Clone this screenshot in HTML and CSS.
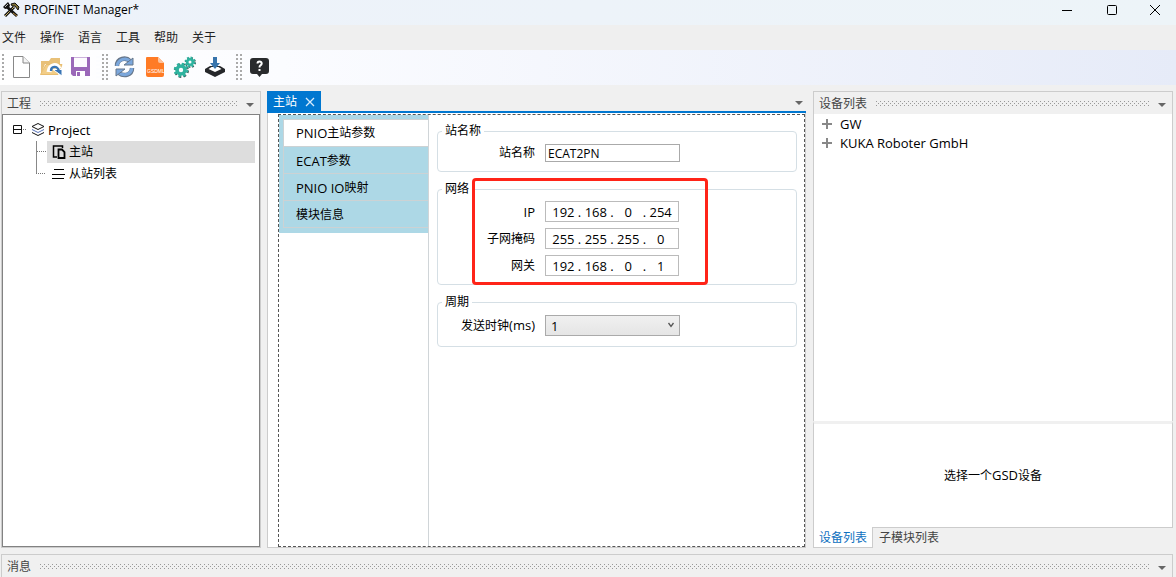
FILE: index.html
```html
<!DOCTYPE html>
<html lang="zh-CN">
<head>
<meta charset="utf-8">
<title>PROFINET Manager*</title>
<link rel="stylesheet" href="styles.css">
</head>
<body>
<header class="titlebar">
  <svg class="app-icon" width="18" height="18" viewBox="0 0 18 18"><path d="M3 15 12 6" stroke="#111" stroke-width="3"/><path d="M3 15 12 6" stroke="#c9b26a" stroke-width="1"/><path d="M5 6 15 15" stroke="#111" stroke-width="3"/><path d="M11 12 15 15" stroke="#b98b3c" stroke-width="1"/><path d="M1 6 6 1 8 4 7 7 3 8Z" fill="#111"/><path d="M3 6 6 3" stroke="#bbb"/><path d="M9 3 13 2 17 6 16 9 13 5 10 5Z" fill="#817337" stroke="#111"/></svg>
  <h1 class="app-title">PROFINET Manager*</h1>
  <div class="window-buttons">
    <button class="window-button" aria-label="最小化"><svg width="12" height="12" viewBox="0 0 12 12"><path d="M1 6.500H11" stroke="#000"/></svg></button>
    <button class="window-button" aria-label="最大化"><svg width="12" height="12" viewBox="0 0 12 12"><rect x="1.500" y="1.500" width="9" height="9" rx="1" fill="none" stroke="#000"/></svg></button>
    <button class="window-button" aria-label="关闭"><svg width="12" height="12" viewBox="0 0 12 12"><path d="M1 1 11 11M11 1 1 11" stroke="#000"/></svg></button>
  </div>
</header>
<nav class="menubar">
  <button class="menu">文件</button><button class="menu">操作</button><button class="menu">语言</button><button class="menu">工具</button><button class="menu">帮助</button><button class="menu">关于</button>
</nav>
<div class="toolbar">
  <span class="handle handle-first"></span>
  <button class="tool" aria-label="新建"><svg width="24" height="24" viewBox="0 0 24 24"><path d="M4.500 1.500H14L20.500 8V22.500H4.500Z" fill="#fff" stroke="#888"/><path d="M14 1.500V8H20.500" fill="#f4f4f4" stroke="#888"/></svg></button>
  <button class="tool" aria-label="打开"><svg width="24" height="24" viewBox="0 0 24 24"><path d="M2 20V6H10L12 3H21V9H6Z" fill="#e8c078"/><path d="M1.500 19.500 7 9.500H23L19 19.500Z" fill="#f2cd87" stroke="#e8bd70"/><path d="M10 17C11 9 18 9 20 14" fill="none" stroke="#fff" stroke-width="5"/><path d="M14 14.500H23V21Z" fill="#3975b5" stroke="#fff"/><path d="M12 16C12 11 18 10 20 16" fill="none" stroke="#3975b5" stroke-width="2.400"/></svg></button>
  <button class="tool" aria-label="保存"><svg width="24" height="24" viewBox="0 0 24 24"><path d="M2 2H21V21H4L2 19Z" fill="#9b68b9"/><path d="M5 2.500H18V12H5Z" fill="#fdfbfe"/><path d="M7 16H16V21H7Z" fill="#fff"/><path d="M8 17H11V21H8Z" fill="#9b68b9"/></svg></button>
  <span class="handle"></span>
  <button class="tool" aria-label="刷新"><svg width="24" height="24" viewBox="0 0 24 24"><path d="M4 11C4 3 13 2 17 6" fill="none" stroke="#66768a" stroke-width="4.500"/><path d="M4 11C5 4 13 2 17 6" fill="none" stroke="#7ba7dc" stroke-width="3"/><path d="M11 10 20 3V10Z" fill="#7ba7dc" stroke="#66768a"/><path d="M19 13C19 20 11 22 6 18" fill="none" stroke="#66768a" stroke-width="4.500"/><path d="M19 13C18 20 11 21 6 18" fill="none" stroke="#7ba7dc" stroke-width="3"/><path d="M12 14 3 21V14Z" fill="#7ba7dc" stroke="#66768a"/></svg></button>
  <button class="tool" aria-label="GSDML"><svg width="24" height="24" viewBox="0 0 24 24"><path d="M3 3Q3 2 4 2H15L21 8V20Q21 22 19 22H5Q3 22 3 20Z" fill="#ff7b25"/><path d="M15 2 21 8H17Q15 8 15 6Z" fill="#ffc29b"/><text x="4" y="18" font-family="Liberation Sans, sans-serif" font-size="5" fill="#fff">GSDML</text></svg></button>
  <button class="tool" aria-label="设置"><svg width="24" height="24" viewBox="0 0 24 24"><g fill="none" stroke="#3b4f4c"><circle cx="8.500" cy="15.500" r="6.300" stroke-width="2.200" stroke-dasharray="2.500 2.450"/><circle cx="17.500" cy="7.500" r="4.500" stroke-width="2" stroke-dasharray="1.800 1.730"/></g><g fill="none" stroke="#2eb39f"><circle cx="8" cy="15" r="4" stroke-width="3.600"/><circle cx="8" cy="15" r="6.300" stroke-width="2" stroke-dasharray="2.500 2.450"/><circle cx="17" cy="7" r="2.800" stroke-width="2.600"/><circle cx="17" cy="7" r="4.500" stroke-width="2" stroke-dasharray="1.800 1.730"/></g></svg></button>
  <button class="tool" aria-label="下载"><svg width="24" height="24" viewBox="0 0 24 24"><path d="M2 14 7 11H17L22 14V17L12 22 2 17Z" fill="#25272a"/><path d="M5.500 14 8.500 12H15.500L18.500 14 12 17Z" fill="#fff"/><path d="M10 2H14V8H17L12 14 7 8H10Z" fill="#3774ac"/></svg></button>
  <span class="handle"></span>
  <button class="tool" aria-label="帮助"><svg width="24" height="24" viewBox="0 0 24 24"><path d="M5 3H19Q22 3 22 6V16Q22 19 19 19H15L12.500 22 10 19H6Q3 19 3 16V6Q3 3 6 3Z" fill="#292b2d"/><path d="M10.500 8.500Q10.500 6.500 12.500 6.500T14.700 8.400Q14.700 9.500 13.500 10.300 12.500 11 12.500 12.500" fill="none" stroke="#fff" stroke-width="2"/><path d="M11.500 14H13.500V16H11.500Z" fill="#fff"/></svg></button>
</div>
<main class="workspace">
  <section class="panel project-panel">
    <div class="panel-head"><h2 class="panel-title">工程</h2><span class="dots"></span><button class="caret" aria-label="面板菜单"></button></div>
    <div class="tree">
      <div class="tree-row"><svg width="36" height="22" viewBox="0 0 36 22"><path d="M1.500 6.500H9.500V14.500H1.500ZM1 10.500H9" fill="none" stroke="#111"/><path d="M11 10.500H15" stroke="#777" stroke-dasharray="1 1"/><path d="M20 7.500 26 4.500 32 7.500 26 10.500Z" fill="none" stroke="#111"/><path d="M20 10.500 26 13.500 32 10.500" fill="none" stroke="#5671b8"/><path d="M20 13.500 26 16.500 32 13.500" fill="none" stroke="#111"/></svg><span class="lat">Project</span></div>
      <div class="tree-row"><svg width="24" height="22" viewBox="0 0 24 22"><path d="M13.500 0V22" stroke="#888"/><path d="M14 10.500H23" stroke="#777" stroke-dasharray="1 1"/></svg><span class="tree-item selected"><svg width="18" height="18" viewBox="0 0 18 18"><path d="M6 14H2.500V3H11.500V5" fill="none" stroke="#000" stroke-width="1.500"/><path d="M7.500 6.500H11L13.500 9V15H7.500Z" fill="none" stroke="#000" stroke-width="1.800"/></svg>主站</span></div>
      <div class="tree-row"><svg width="24" height="22" viewBox="0 0 24 22"><path d="M13.500 0V10.500" stroke="#888"/><path d="M13 10.500H23" stroke="#777" stroke-dasharray="1 1"/></svg><span class="tree-item"><svg width="18" height="18" viewBox="0 0 18 18"><path d="M3 4.500H13M1 9.500H14M1 13.500H13" stroke="#000"/></svg>从站列表</span></div>
    </div>
  </section>
  <section class="editor">
    <div class="doc-tabs"><div class="doc-tab">主站<button class="close" aria-label="关闭"><svg width="10" height="10" viewBox="0 0 10 10"><path d="M1 1 9 9M9 1 1 9" stroke="#d7ebfb" stroke-width="1.300"/></svg></button></div><button class="caret" aria-label="文档列表"></button></div>
    <div class="doc">
      <div class="doc-focus">
        <div class="side">
          <div class="side-tabs">
            <button class="side-tab active"><span class="lat">PNIO</span>主站参数</button>
            <button class="side-tab"><span class="lat">ECAT</span>参数</button>
            <button class="side-tab"><span class="lat">PNIO IO</span>映射</button>
            <button class="side-tab">模块信息</button>
          </div>
        </div>
        <form class="form">
          <fieldset class="group group-name"><legend>站名称</legend>
            <div class="field"><label for="station">站名称</label><input class="text-input" id="station" value="ECAT2PN"></div>
          </fieldset>
          <fieldset class="group group-net"><legend>网络</legend>
            <div class="field"><label class="lat" for="ip1">IP</label><div class="ip"><input id="ip1" value="192">.<input aria-label="IP 2" value="168">.<input aria-label="IP 3" value="0">.<input aria-label="IP 4" value="254"></div></div>
            <div class="field"><label for="mask1">子网掩码</label><div class="ip"><input id="mask1" value="255">.<input aria-label="子网掩码 2" value="255">.<input aria-label="子网掩码 3" value="255">.<input aria-label="子网掩码 4" value="0"></div></div>
            <div class="field"><label for="gw1">网关</label><div class="ip"><input id="gw1" value="192">.<input aria-label="网关 2" value="168">.<input aria-label="网关 3" value="0">.<input aria-label="网关 4" value="1"></div></div>
            <div class="highlight"></div>
          </fieldset>
          <fieldset class="group group-cycle"><legend>周期</legend>
            <div class="field"><label for="clock">发送时钟<span class="lat">(ms)</span></label><div class="select-wrap"><select id="clock"><option>1</option></select><svg class="chevron" width="8" height="8" viewBox="0 0 8 8"><path d="M1.500 2 4 5.500 6.500 2" fill="none" stroke="#555" stroke-width="1.300"/></svg></div></div>
          </fieldset>
        </form>
      </div>
    </div>
  </section>
  <section class="device-panel">
    <div class="panel-head device-head"><h2 class="panel-title">设备列表</h2><span class="dots"></span><button class="caret" aria-label="面板菜单"></button></div>
    <div class="device-list">
      <div class="device"><svg width="12" height="12" viewBox="0 0 12 12"><path d="M6 1V11M1 6H11" stroke="#888" stroke-width="2"/></svg>GW</div>
      <div class="device"><svg width="12" height="12" viewBox="0 0 12 12"><path d="M6 1V11M1 6H11" stroke="#888" stroke-width="2"/></svg>KUKA Roboter GmbH</div>
    </div>
    <div class="device-detail"><span>选择一个<span class="lat">GSD</span>设备</span></div>
    <div class="device-tabs"><button class="device-tab current">设备列表</button><button class="device-tab">子模块列表</button></div>
  </section>
</main>
<footer class="messages"><div class="panel-head"><h2 class="panel-title">消息</h2><span class="dots"></span><button class="caret" aria-label="面板菜单"></button></div></footer>
</body>
</html>
```
FILE: styles.css
```css
* { box-sizing: border-box; }
body {
  margin: 0; height: 100vh; display: flex; flex-direction: column; overflow: hidden;
  background: #f0f0f0; color: #000;
  font: 12px/16px "Open Sans", "Noto Sans CJK SC", sans-serif;
}
button, input, select { font: inherit; color: inherit; margin: 0; padding: 0; border: 0; background: none; }
button { display: flex; align-items: center; justify-content: center; white-space: nowrap; }
svg { flex: none; display: block; fill: none; }
.lat { font-size: 13px; }

.titlebar { display: flex; align-items: center; height: 25px; flex: none; background: linear-gradient(90deg, #edf2fa, #edf4f8); padding-bottom: 6px; }
.app-icon { margin: 0 4px 0 2px; }
.app-title { margin: 0; font-size: 12px; font-weight: 400; flex: 1; }
.window-buttons { display: flex; }
.window-button { width: 45px; height: 18px; }
.window-button:last-child { width: 42px; }

.menubar { display: flex; gap: 14px; height: 25px; padding-left: 2px; flex: none; background: #efefef; }
.menu { color: #222; }
.toolbar { display: flex; align-items: center; height: 35px; padding-bottom: 2px; flex: none; background: linear-gradient(90deg, #fff, #fbfcff 24%, #e6ebf8); }
.tool { width: 30px; height: 30px; }
.handle {
  width: 14px; height: 26px; flex: none;
  background: repeating-linear-gradient(#fff0 0 2px, #fcfdff 2px 4px), linear-gradient(#aaa, #aaa) 6px 0 / 2px 100% no-repeat, linear-gradient(#aaa, #aaa) 10px 0 / 2px 100% no-repeat;
}
.handle-first { width: 6px; background: repeating-linear-gradient(#fff0 0 2px, #fff 2px 4px), linear-gradient(#aaa, #aaa) 2px 0 / 2px 100% no-repeat; }

.workspace { flex: 1; min-height: 0; display: flex; gap: 6px; padding: 6px 3px 0 1px; }
.panel { border: 1px solid #ccc; display: flex; flex-direction: column; }
.project-panel { width: 260px; flex: none; }
.panel-head { display: flex; align-items: center; height: 22px; flex: none; padding: 1px 0 0 5px; color: #444; background: #f0f0f0; }
.panel-title { margin: 0; font-size: 12px; font-weight: 400; white-space: nowrap; }
.dots {
  flex: 1; height: 5px; margin: 0 8px 0 9px;
  background: linear-gradient(90deg, #999 1px, transparent 1px) 0 0 / 4px 1px repeat-x,
    linear-gradient(90deg, #999 1px, transparent 1px) 2px 2px / 4px 1px repeat-x,
    linear-gradient(90deg, #999 1px, transparent 1px) 0 4px / 4px 1px repeat-x;
}
.caret { width: 10px; height: 20px; flex: none; margin-right: 5px; }
.caret::before { content: ""; border: 4px solid transparent; border-top-color: #666; border-bottom: 0; margin-top: 2px; }
.tree { flex: 1; background: #fff; border: 1px solid #828282; padding: 4px 4px 0 9px; }
.tree-row { display: flex; align-items: center; height: 22px; }
.tree-item { display: flex; align-items: center; flex: 1; height: 22px; padding-left: 4px; }
.tree-row:not(:first-child) { padding-left: 11px; }
.selected { background: #ddd; }

.editor { flex: 1; min-width: 0; display: flex; flex-direction: column; }
.doc-tabs { display: flex; justify-content: space-between; align-items: flex-end; height: 22px; border-bottom: 2px solid #0077d0; flex: none; }
.doc-tab { display: flex; align-items: center; gap: 8px; height: 20px; padding: 2px 6px 0; background: #0077d0; color: #fff; }
.doc-tabs .caret { margin-right: 2px; height: 18px; }
.doc { flex: 1; min-height: 0; display: flex; background: #fff; border: 1px solid #ccc; border-top: 0; padding: 1px 0 0 10px; }
.doc-focus { flex: 1; display: flex; border: 1px dashed #555; }
.side { width: 150px; flex: none; border-right: 1px solid #d0d5d8; }
.side-tabs { background: #add8e6; padding: 4px 0 5px 4px; }
.side-tab { width: 100%; height: 27px; justify-content: flex-start; padding: 1px 0 0 12px; border: solid #ccd2d4; border-width: 0 0 1px 1px; }
.side-tab.active { background: #fff; height: 28px; padding-top: 0; border-top: 1px solid #ccd2d4; }
.form { flex: 1; min-width: 0; display: flex; flex-direction: column; gap: 9px; padding: 8px 7px 8px 8px; }
.group { position: relative; margin: 0; min-width: 0; border: 1px solid #d5dfe5; border-radius: 4px; padding: 5px 0 9px; }
.group-net { padding: 4px 0 8px; }
.group-cycle { padding-bottom: 10px; }
.group legend { margin-left: 4px; padding: 0 3px; }
.field { display: grid; grid-template-columns: 97px 135px; column-gap: 10px; align-items: center; }
.field + .field { margin-top: 6px; }
.field label { text-align: right; white-space: nowrap; }
.text-input { height: 18px; border: 1px solid #aaa; padding: 0 2px; width: 100%; }
.ip { display: flex; align-items: center; justify-content: center; width: 134px; height: 21px; border: 1px solid #bbb; font-size: 13px; }
.ip input { width: 29px; height: 17px; text-align: center; }
.select-wrap { position: relative; }
.select-wrap select { display: block; width: 100%; height: 21px; padding-left: 5px; appearance: none; border: 1px solid #aaa; background: linear-gradient(#f0f0f0, #e5e5e5); font-size: 13px; }
.chevron { position: absolute; right: 5px; top: 6px; }
.highlight { position: absolute; left: 34px; top: -19px; width: 236px; bottom: -1px; border: 3px solid #ff2418; border-radius: 4px; pointer-events: none; }

.device-panel { width: 360px; flex: none; margin-left: 1px; display: flex; flex-direction: column; }
.device-head { border: solid #ccc; border-width: 1px 1px 0; height: 23px; }
.device-list { flex: 1; background: #fff; border: solid #ccc; border-width: 0 1px; padding: 0 7px; }
.device { display: flex; align-items: center; gap: 7px; height: 19px; font-size: 13px; }
.device-detail { display: flex; align-items: center; justify-content: center; height: 107px; flex: none; background: #fff; border: 1px solid #ccc; border-top: 3px solid #f0f0f0; }
.device-tabs { display: flex; height: 20px; flex: none; }
.device-tab { padding: 0 6px; color: #444; }
.device-tab.current { background: #fff; color: #0e70c0; border: 1px solid #ccc; border-top: 0; padding: 1px 5px 0; margin-top: -1px; }

.messages { flex: none; height: 23px; margin: 6px 3px 0 1px; border: 1px solid #ccc; border-bottom: 0; }
```
